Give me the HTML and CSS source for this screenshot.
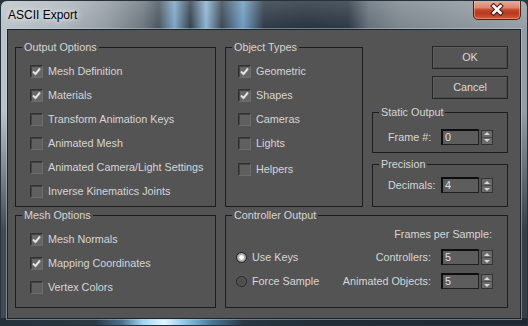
FILE: index.html
```html
<!DOCTYPE html>
<html>
<head>
<meta charset="utf-8">
<title>ASCII Export</title>
<link rel="stylesheet" href="styles.css">
</head>
<body>
<div class="window">
  <div class="titlebar">
    <span class="title">ASCII Export</span>
    <div class="close">
      <svg width="46" height="18" viewBox="0 0 46 18">
        <path d="M19.5 5 L26.5 12 M26.5 5 L19.5 12" stroke="#3a2018" stroke-width="4.6" stroke-linecap="square" fill="none"/>
        <path d="M19.5 5 L26.5 12 M26.5 5 L19.5 12" stroke="#ffffff" stroke-width="2.6" stroke-linecap="square" fill="none"/>
      </svg>
    </div>
  </div>
  <div class="client">
    <div class="layout">
      <fieldset class="group g-output">
        <legend>Output Options</legend>
        <div class="checks">
          <div class="check"><span class="box on"><svg width="11" height="11" viewBox="0 0 11 11"><path d="M2 5.5 L4.5 8 L9 2.5" stroke="#e2e2e2" stroke-width="2" fill="none"/></svg></span>Mesh Definition</div>
          <div class="check"><span class="box on"><svg width="11" height="11" viewBox="0 0 11 11"><path d="M2 5.5 L4.5 8 L9 2.5" stroke="#e2e2e2" stroke-width="2" fill="none"/></svg></span>Materials</div>
          <div class="check"><span class="box"></span>Transform Animation Keys</div>
          <div class="check"><span class="box"></span>Animated Mesh</div>
          <div class="check"><span class="box"></span>Animated Camera/Light Settings</div>
          <div class="check"><span class="box"></span>Inverse Kinematics Joints</div>
        </div>
      </fieldset>
      <fieldset class="group g-types">
        <legend>Object Types</legend>
        <div class="checks">
          <div class="check"><span class="box on"><svg width="11" height="11" viewBox="0 0 11 11"><path d="M2 5.5 L4.5 8 L9 2.5" stroke="#e2e2e2" stroke-width="2" fill="none"/></svg></span>Geometric</div>
          <div class="check"><span class="box on"><svg width="11" height="11" viewBox="0 0 11 11"><path d="M2 5.5 L4.5 8 L9 2.5" stroke="#e2e2e2" stroke-width="2" fill="none"/></svg></span>Shapes</div>
          <div class="check"><span class="box"></span>Cameras</div>
          <div class="check"><span class="box"></span>Lights</div>
          <div class="check last"><span class="box"></span>Helpers</div>
        </div>
      </fieldset>
      <div class="side">
        <div class="btn">OK</div>
        <div class="btn">Cancel</div>
        <fieldset class="group g-static">
          <legend>Static Output</legend>
          <div class="field">
            <span class="flabel">Frame #:</span>
            <div class="spin"><div class="spin-input">0</div><div class="spin-btns"><span class="up"></span><span class="down"></span></div></div>
          </div>
        </fieldset>
        <fieldset class="group g-precision">
          <legend>Precision</legend>
          <div class="field">
            <span class="flabel">Decimals:</span>
            <div class="spin"><div class="spin-input">4</div><div class="spin-btns"><span class="up"></span><span class="down"></span></div></div>
          </div>
        </fieldset>
      </div>
      <fieldset class="group g-mesh">
        <legend>Mesh Options</legend>
        <div class="checks">
          <div class="check"><span class="box on"><svg width="11" height="11" viewBox="0 0 11 11"><path d="M2 5.5 L4.5 8 L9 2.5" stroke="#e2e2e2" stroke-width="2" fill="none"/></svg></span>Mesh Normals</div>
          <div class="check"><span class="box on"><svg width="11" height="11" viewBox="0 0 11 11"><path d="M2 5.5 L4.5 8 L9 2.5" stroke="#e2e2e2" stroke-width="2" fill="none"/></svg></span>Mapping Coordinates</div>
          <div class="check"><span class="box"></span>Vertex Colors</div>
        </div>
      </fieldset>
      <fieldset class="group g-ctrl">
        <legend>Controller Output</legend>
        <div class="ctrl-body">
          <div class="fps">Frames per Sample:</div>
          <div class="crow">
            <div class="radio-label"><span class="radio on"></span>Use Keys</div>
            <div class="cfield"><span>Controllers:</span>
              <div class="spin"><div class="spin-input">5</div><div class="spin-btns"><span class="up"></span><span class="down"></span></div></div>
            </div>
          </div>
          <div class="crow">
            <div class="radio-label"><span class="radio"></span>Force Sample</div>
            <div class="cfield"><span>Animated Objects:</span>
              <div class="spin"><div class="spin-input">5</div><div class="spin-btns"><span class="up"></span><span class="down"></span></div></div>
            </div>
          </div>
        </div>
      </fieldset>
    </div>
  </div>
</div>
</body>
</html>
```
FILE: styles.css
```css
html, body {
  margin: 0;
  padding: 0;
  background: #2a3540;
}

body {
  font: 10.8px "Liberation Sans", Arial, sans-serif;
  color: #d6d6d6;
}

.window {
  width: 528px;
  height: 326px;
  box-sizing: border-box;
  border: 1px solid #26313b;
  border-radius: 7px 7px 0 0;
  overflow: hidden;
  display: flex;
  flex-direction: column;
  background:
    linear-gradient(90deg, #24303a 0%, #2c3a46 18%, #4c6f8c 23%, #9fd6f4 27%, #e2f6ff 31%, #8cc6e8 35%, #4a7898 40%, #2a3846 46%, #222d36 60%, #1f2830 100%) bottom / 100% 7px no-repeat,
    linear-gradient(180deg, rgba(255,255,255,0.16) 0, rgba(255,255,255,0) 28px, rgba(0,0,0,0) 110px, rgba(14,22,30,0.7) 230px),
    linear-gradient(90deg, #bcc4cb 0%, #adb5bc 12%, #939ca3 20%, #6d7780 27%, #4a5660 30%, #7ea6c6 33%, #34414c 36%, #8cb4d2 39%, #3a4754 42%, #6f9cc0 46%, #2e3a46 50%, #27333e 58%, #2c3843 66%, #66717a 70%, #7c868e 76%, #8a949b 88%, #959ea5 100%);
}

.titlebar {
  height: 28px;
  display: flex;
  align-items: flex-start;
  justify-content: space-between;
  padding-left: 7px;
  flex-shrink: 0;
}

.title {
  margin-top: 7px;
  font: 12px "Liberation Sans", Arial, sans-serif;
  line-height: 15px;
  color: #000;
  text-shadow: 0 0 5px rgba(255,255,255,0.9), 0 0 9px rgba(255,255,255,0.7);
}

.close {
  width: 48px;
  height: 20px;
  box-sizing: border-box;
  margin-top: -1px;
  margin-right: 6px;
  border: 1px solid #4a2418;
  border-top: none;
  border-radius: 0 0 5px 5px;
  background: linear-gradient(180deg, #e9b2a2 0%, #d9876f 40%, #c4472a 52%, #b8381c 70%, #d65a38 100%);
  box-shadow: inset 0 0 0 1px rgba(255,200,180,0.45);
  display: flex;
  align-items: center;
  justify-content: center;
}

.close svg {
  display: block;
}

.client {
  margin: 0 6px;
  height: 290px;
  box-sizing: border-box;
  background: #545454;
  border: 1px solid #1a232b;
  box-shadow: 0 0 0 1px rgba(200, 216, 226, 0.45);
  flex-shrink: 0;
}

.layout {
  display: grid;
  grid-template-columns: 201px 138px 136px;
  grid-template-rows: 166px 99px;
  column-gap: 9px;
  row-gap: 2px;
  padding: 11px 0 0 7px;
}

.group {
  margin: 0;
  padding: 0;
  min-width: 0;
  box-sizing: border-box;
  border: 1px solid #1d1d1d;
}

.group legend {
  padding: 0 2px;
  margin-left: 6px;
  line-height: 13px;
  color: #d6d6d6;
}

.checks {
  display: flex;
  flex-direction: column;
  padding: 5px 0 0 14px;
}

.g-types .checks {
  padding-left: 12px;
}

.check {
  height: 24px;
  display: flex;
  align-items: center;
  gap: 5px;
  white-space: nowrap;
}

.check.last {
  margin-top: 2px;
}

.box {
  width: 13px;
  height: 13px;
  box-sizing: border-box;
  border: 1px solid;
  border-color: #303030 #6c6c6c #6c6c6c #303030;
  background: #5f5f5f;
  box-shadow: inset 1px 1px 0 #444;
  display: flex;
  align-items: center;
  justify-content: center;
  flex-shrink: 0;
}

.box.on {
  background: #666;
}

.box svg {
  display: block;
}

.side {
  display: flex;
  flex-direction: column;
  padding-top: 5px;
}

.btn {
  align-self: flex-end;
  width: 76px;
  height: 23px;
  box-sizing: border-box;
  margin-bottom: 7px;
  border: 1px solid #262626;
  background: #555;
  box-shadow: inset 1px 1px 0 #5e5e5e, inset -1px -1px 0 #4a4a4a;
  color: #dadada;
  display: flex;
  align-items: center;
  justify-content: center;
}

.g-static {
  height: 48px;
  margin-bottom: 5px;
}

.g-precision {
  height: 49px;
}

.field {
  display: flex;
  align-items: center;
  height: 16px;
  padding-left: 15px;
}

.g-static .field {
  margin-top: 10px;
}

.g-precision .field {
  margin-top: 6px;
}

.flabel {
  width: 53px;
}

.spin {
  display: flex;
  gap: 2px;
  align-items: flex-start;
}

.spin-input {
  width: 38px;
  height: 16px;
  box-sizing: border-box;
  border: 1px solid #202020;
  border-top: 2px solid #0e0e0e;
  border-left: 2px solid #0e0e0e;
  background: #5d5d5d;
  color: #e0e0e0;
  padding-left: 2px;
  line-height: 12px;
}

.spin-btns {
  width: 12px;
  height: 15px;
  margin-top: 1px;
  box-sizing: border-box;
  border: 1px solid #333;
  background: #6a6a6a;
  display: flex;
  flex-direction: column;
}

.spin-btns span {
  flex: 1;
  display: flex;
  align-items: center;
  justify-content: center;
}

.spin-btns .up {
  border-bottom: 1px solid #4a4a4a;
}

.spin-btns .up::before {
  content: "";
  border-left: 3px solid transparent;
  border-right: 3px solid transparent;
  border-bottom: 3px solid #d6d6d6;
}

.spin-btns .down::before {
  content: "";
  border-left: 3px solid transparent;
  border-right: 3px solid transparent;
  border-top: 3px solid #d6d6d6;
}

.g-ctrl {
  grid-column: 2 / 4;
}

.ctrl-body {
  padding: 5px 14px 0 10px;
}

.fps {
  text-align: right;
  line-height: 14px;
  padding-right: 1px;
  margin-bottom: 8px;
}

.crow {
  display: flex;
  align-items: center;
  height: 16px;
  margin-bottom: 8px;
}

.radio-label {
  display: flex;
  align-items: center;
  gap: 5px;
}

.radio {
  width: 11px;
  height: 11px;
  box-sizing: border-box;
  border-radius: 50%;
  border: 1px solid #262626;
  background: radial-gradient(circle at 50% 50%, #4e4e4e 0 45%, #5a5a5a 70%, #707070 100%);
}

.radio.on {
  background: radial-gradient(circle at 50% 50%, #ffffff 0 28%, #c4c4c4 40%, #8c8c8c 75%, #6e6e6e 100%);
}

.cfield {
  margin-left: auto;
  display: flex;
  align-items: center;
  gap: 10px;
}
```
